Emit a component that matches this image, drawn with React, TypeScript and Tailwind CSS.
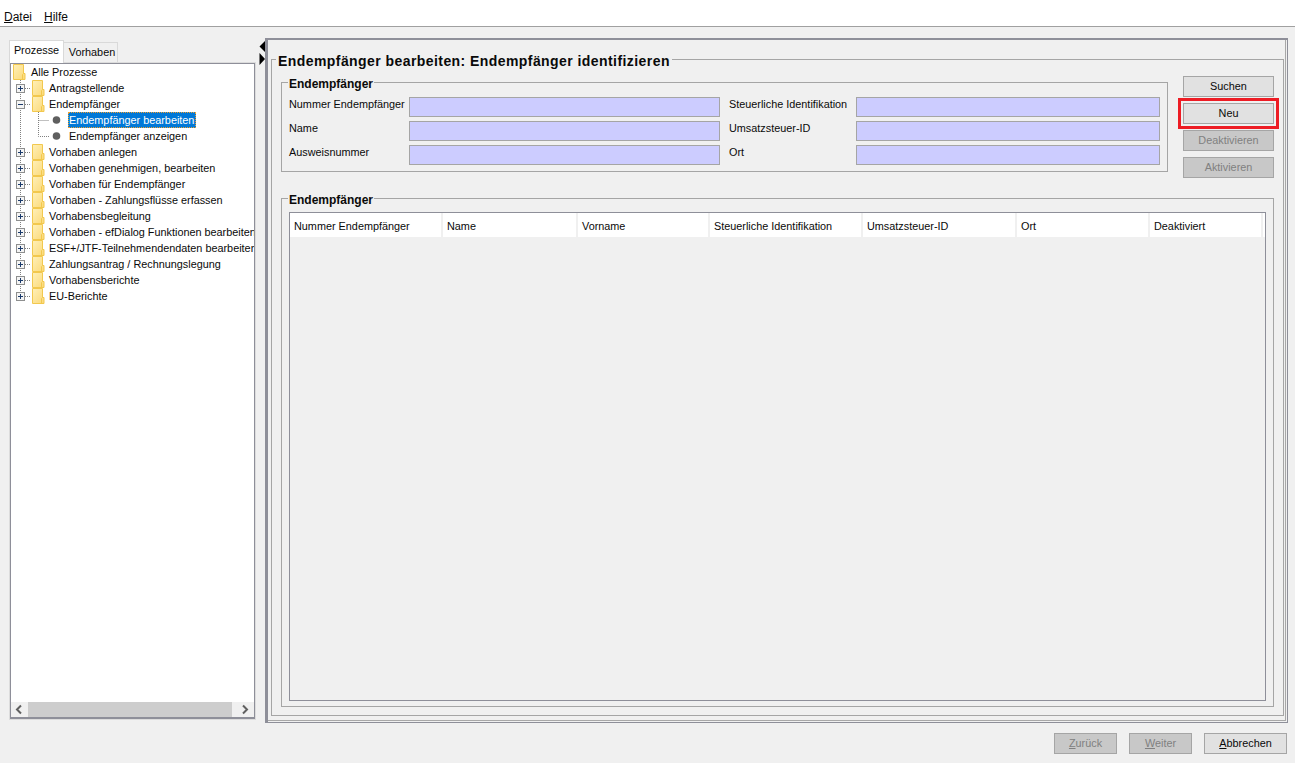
import React from "react";

const Folder = () => (
  <svg width="13" height="16" viewBox="0 0 13 16" className="shrink-0">
    <defs>
      <linearGradient id="fg" x1="0" y1="0" x2="1" y2="1">
        <stop offset="0" stopColor="#fff0b8" />
        <stop offset="1" stopColor="#fbd978" />
      </linearGradient>
    </defs>
    <path d="M0.5 0.5H10.5V9.5H12V15.5H0.5Z" fill="url(#fg)" stroke="#f2c84e" />
    <path d="M9.5 15.5V10.5L10.5 9.5" stroke="#f2c84e" fill="none" />
  </svg>
);

const Box = ({ open, last }: { open?: boolean; last?: boolean }) => (
  <svg width="21" height="16" viewBox="0 0 21 16" className="shrink-0">
    <path d={last ? "M9.5 0V8" : "M9.5 0V16"} stroke="#808080" strokeDasharray="1 1" />
    <path d="M14 8.5H19" stroke="#808080" strokeDasharray="1 1" />
    <rect x="5.5" y="4.5" width="8" height="8" fill="#f4f4f4" stroke="#8e8f8f" />
    <path d="M7 8.5H12" stroke="#1a3a6b" />
    {!open && <path d="M9.5 6V11" stroke="#1a3a6b" />}
  </svg>
);

const items1 = ["Antragstellende"];
const items2 = [
  "Vorhaben anlegen",
  "Vorhaben genehmigen, bearbeiten",
  "Vorhaben für Endempfänger",
  "Vorhaben - Zahlungsflüsse erfassen",
  "Vorhabensbegleitung",
  "Vorhaben - efDialog Funktionen bearbeiten",
  "ESF+/JTF-Teilnehmendendaten bearbeiten",
  "Zahlungsantrag / Rechnungslegung",
  "Vorhabensberichte",
  "EU-Berichte",
];

const Row = ({ label, open, last }: { label: string; open?: boolean; last?: boolean }) => (
  <div className="flex h-4 items-center whitespace-nowrap">
    <Box open={open} last={last} />
    <Folder />
    <span className="ml-1">{label}</span>
  </div>
);

const Leaf = ({ label, selected, last }: { label: string; selected?: boolean; last?: boolean }) => (
  <div className="flex h-4 items-center whitespace-nowrap">
    <svg width="57" height="16" viewBox="0 0 57 16" className="shrink-0">
      <path d="M9.5 0V16" stroke="#808080" strokeDasharray="1 1" />
      <path d={last ? "M27.5 0V8.5H38" : "M27.5 0V16M27.5 8.5H38"} stroke="#808080" strokeDasharray="1 1" fill="none" />
      <circle cx="45.5" cy="8" r="3.8" fill="#5f5f5f" />
    </svg>
    {selected ? (
      <span className="h-4 border border-dotted border-[#f0a030] bg-[#0078d7] pr-px leading-[14px] text-white">{label}</span>
    ) : (
      <span className="ml-px">{label}</span>
    )}
  </div>
);

const Btn = ({ label, disabled, cls = "" }: { label: React.ReactNode; disabled?: boolean; cls?: string }) => (
  <div
    className={`flex h-[21px] items-center justify-center border border-[#a5a5a5] pb-[2px] ${
      disabled ? "bg-[#c8c8c8] text-[#808080]" : "bg-[#e1e1e1] text-[#0a0a0a]"
    } ${cls}`}
  >
    {label}
  </div>
);

const Field = ({ label, labelW }: { label: string; labelW: string }) => (
  <div className="flex h-5 items-center">
    <span className={`shrink-0 -translate-y-[3px] whitespace-nowrap ${labelW}`}>{label}</span>
    <div className="h-5 flex-1 border border-[#a5a5a5] bg-[#ccccff]" />
  </div>
);

const cols: [string, string][] = [
  ["Nummer Endempfänger", "w-[153px]"],
  ["Name", "w-[135px]"],
  ["Vorname", "w-[132px]"],
  ["Steuerliche Identifikation", "w-[153px]"],
  ["Umsatzsteuer-ID", "w-[154px]"],
  ["Ort", "w-[133px]"],
  ["Deaktiviert", "w-[113px]"],
];

const boldFont = { fontFamily: '"Liberation Sans", sans-serif' };

export default function App() {
  return (
    <div
      className="flex h-[763px] w-[1295px] flex-col overflow-hidden bg-[#f0f0f0] text-[10.85px] leading-4 text-[#0a0a0a]"
      style={{ fontFamily: '"Liberation Sans", sans-serif' }}
    >
      {/* menu */}
      <div className="flex h-[27px] shrink-0 items-center gap-[12px] border-b border-[#a0a0a0] bg-white pl-1 pt-[7px] text-[12px]">
        <span><span className="underline">D</span>atei</span>
        <span><span className="underline">H</span>ilfe</span>
      </div>

      <div className="flex h-[697px] shrink-0 pt-[11px]">
        {/* left */}
        <div className="ml-[9px] flex w-[247px] shrink-0 flex-col">
          <div className="flex h-[25px] items-end">
            <div className="relative z-10 flex h-[23px] w-[55px] items-center justify-center border border-b-0 border-[#d9d9d9] bg-white pb-[5px]">Prozesse</div>
            <div className="flex h-[21px] w-[54px] items-center justify-center border border-b-0 border-l-0 border-[#d9d9d9] bg-[#f0f0f0] pb-[3px] pl-[3px]">Vorhaben</div>
          </div>
          <div className="ml-px flex h-[656px] w-[245px] flex-col border border-b-2 border-[#8e8f99] bg-white outline outline-1 outline-[#dcdcdc]">
            <div className="flex-1 overflow-hidden">
              <div className="flex h-4 items-center whitespace-nowrap pl-[2px]">
                <Folder />
                <span className="ml-[5px]">Alle Prozesse</span>
              </div>
              {items1.map((l) => <Row key={l} label={l} />)}
              <Row label="Endempfänger" open />
              <Leaf label="Endempfänger bearbeiten" selected />
              <Leaf label="Endempfänger anzeigen" last />
              {items2.map((l, i) => <Row key={l} label={l} last={i === items2.length - 1} />)}
            </div>
            <div className="flex h-[15px] shrink-0 items-center bg-[#f0f0f0]">
              <svg width="17" height="15" viewBox="0 0 17 15" className="shrink-0">
                <path d="M10 3.5L6 7.5L10 11.5" stroke="#606060" strokeWidth="2" fill="none" />
              </svg>
              <div className="h-[15px] w-[204px] bg-[#cdcdcd]" />
              <svg width="22" height="15" viewBox="0 0 22 15" className="shrink-0">
                <path d="M11 3.5L15 7.5L11 11.5" stroke="#606060" strokeWidth="2" fill="none" />
              </svg>
            </div>
          </div>
        </div>

        {/* splitter */}
        <div className="flex w-[9px] shrink-0 flex-col pl-[3px] pt-[2px]">
          <svg width="7" height="26" viewBox="0 0 7 26">
            <path d="M6.5 0.5V12.5L0.5 6.5Z" fill="#000" />
            <path d="M0.5 13V25L6 19Z" fill="#000" />
          </svg>
        </div>

        {/* right */}
        <div className="h-[685px] w-[1023px] shrink-0 border border-l-[3px] border-t-2 border-[#8e8f99] pb-px pr-px">
          <div className="h-full border-b border-r border-[#a8a8a8] pl-[3px] pr-[3px] pt-[10px]">
            <fieldset className="h-[666px] border border-[#a5a5a5] px-[9px]">
              <legend className="ml-[-5px] px-[2px] text-[14px] font-bold leading-[18px] tracking-[0.43px]" style={boldFont}>
                <span className="relative top-[2px]">Endempfänger bearbeiten: Endempfänger identifizieren</span>
              </legend>
              <div className="flex">
                {/* search */}
                <div className="w-[886px] shrink-0 pt-[7px]">
                  <fieldset className="h-[97px] border border-[#a5a5a5] px-[7px]">
                    <legend className="-ml-[1px] px-px text-[12px] font-bold leading-[14px]" style={boldFont}>
                      <span className="relative top-[2px]">Endempfänger</span>
                    </legend>
                    <div className="mt-2 grid grid-cols-[431px_431px] gap-x-[9px] gap-y-1">
                      <Field label="Nummer Endempfänger" labelW="w-[120px]" />
                      <Field label="Steuerliche Identifikation" labelW="w-[127px]" />
                      <Field label="Name" labelW="w-[120px]" />
                      <Field label="Umsatzsteuer-ID" labelW="w-[127px]" />
                      <Field label="Ausweisnummer" labelW="w-[120px]" />
                      <Field label="Ort" labelW="w-[127px]" />
                    </div>
                  </fieldset>
                </div>
                {/* buttons */}
                <div className="ml-[16px] mt-2 flex w-[91px] shrink-0 flex-col">
                  <Btn label="Suchen" />
                  <div className="relative mt-[6px]">
                    <Btn label="Neu" />
                    <div className="pointer-events-none absolute -inset-[5px] border-[3px] border-[#ed1c24]" />
                  </div>
                  <Btn label="Deaktivieren" disabled cls="mt-[6px]" />
                  <Btn label="Aktivieren" disabled cls="mt-[6px]" />
                </div>
              </div>
              {/* table */}
              <fieldset className="mt-[13px] h-[516px] border border-[#a5a5a5] px-[7px]">
                <legend className="-ml-[1px] px-px text-[12px] font-bold leading-[14px]" style={boldFont}>
                  <span className="relative top-[2px]">Endempfänger</span>
                </legend>
                <div className="mt-[7px] h-[489px] border border-[#8e8f99] bg-[#f0f0f0]">
                  <div className="flex h-6 bg-white">
                    {cols.map(([c, w]) => (
                      <div key={c} className={`flex h-6 shrink-0 items-center whitespace-nowrap border-r-2 border-[#f0f0f0] pl-1 pt-[2px] ${w}`}>{c}</div>
                    ))}
                  </div>
                </div>
              </fieldset>
            </fieldset>
          </div>
        </div>
      </div>

      {/* footer */}
      <div className="flex flex-1 items-start justify-end gap-3 pr-2 pt-[9px]">
        <Btn disabled cls="w-[63px]" label={<span><span className="underline">Z</span>urück</span>} />
        <Btn disabled cls="w-[63px]" label={<span><span className="underline">W</span>eiter</span>} />
        <Btn cls="w-[83px]" label={<span><span className="underline">A</span>bbrechen</span>} />
      </div>
    </div>
  );
}
